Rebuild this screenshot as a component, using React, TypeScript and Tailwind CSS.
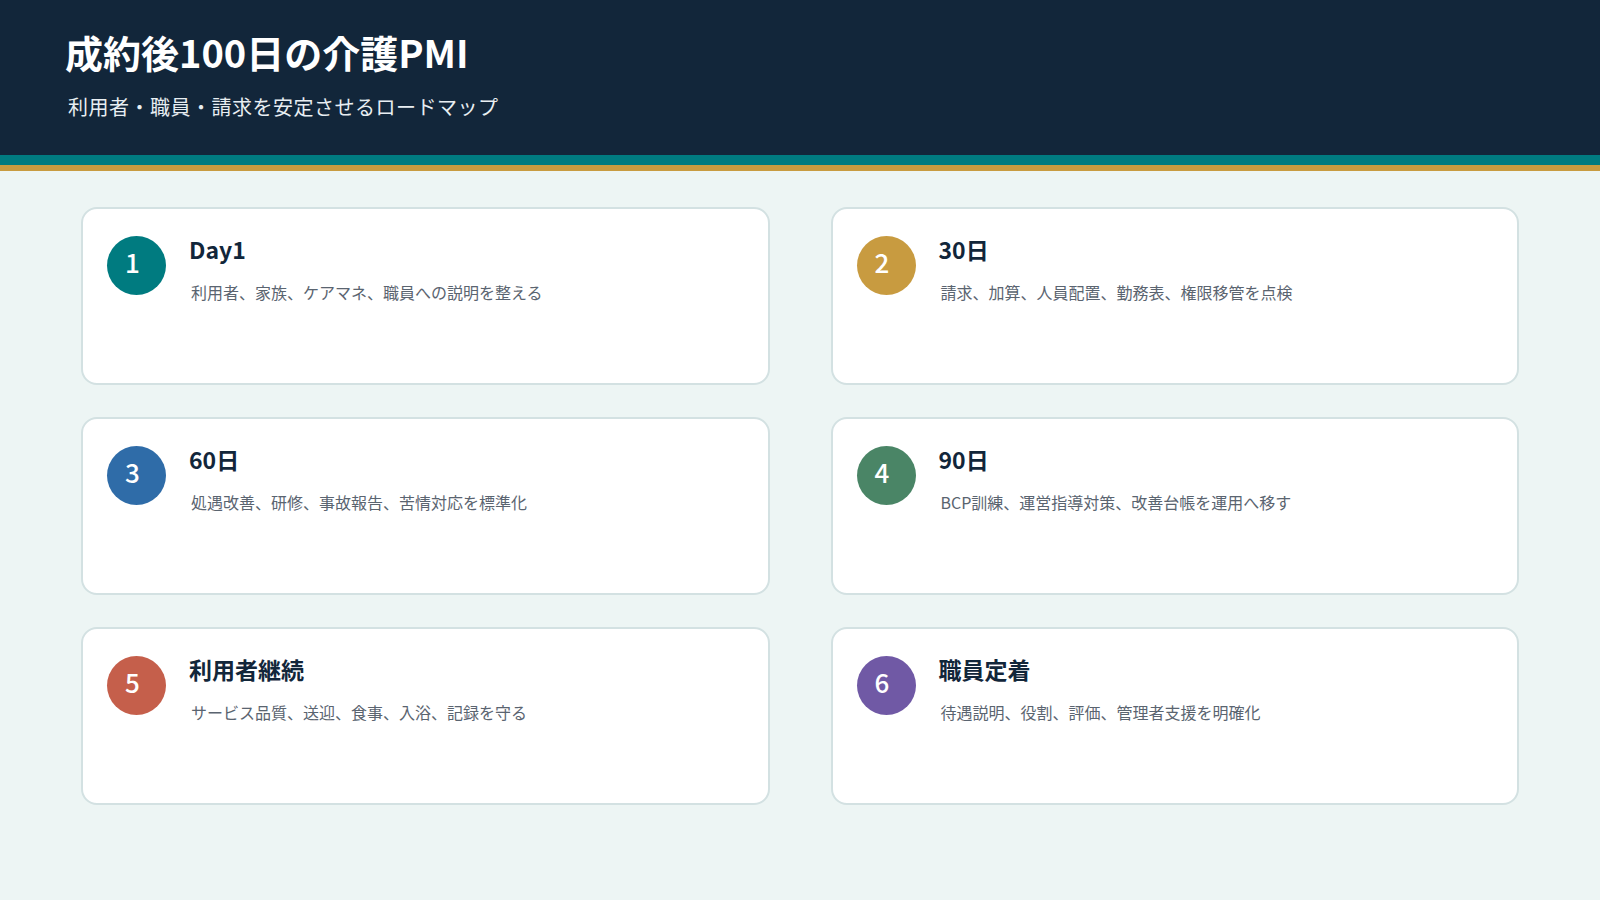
const items = [
  { n: "1", t: "Day1", d: "利用者、家族、ケアマネ、職員への説明を整える", c: "bg-[#007b80]" },
  { n: "2", t: "30日", d: "請求、加算、人員配置、勤務表、権限移管を点検", c: "bg-[#c89b40]" },
  { n: "3", t: "60日", d: "処遇改善、研修、事故報告、苦情対応を標準化", c: "bg-[#2f6ca8]" },
  { n: "4", t: "90日", d: "BCP訓練、運営指導対策、改善台帳を運用へ移す", c: "bg-[#4a8566]" },
  { n: "5", t: "利用者継続", d: "サービス品質、送迎、食事、入浴、記録を守る", c: "bg-[#c55f4b]" },
  { n: "6", t: "職員定着", d: "待遇説明、役割、評価、管理者支援を明確化", c: "bg-[#7059a5]" },
];

export default function App() {
  return (
    <div className="w-[1600px] h-[900px] bg-[#edf5f4] overflow-hidden" style={{ fontFamily: '"Noto Sans CJK JP", "Noto Sans", sans-serif' }}>
      <div className="h-[155px] bg-[#12263a] pl-[65px] pt-[24px]">
        <h1 className="text-[38px] font-bold text-white leading-[56px]">成約後100日の介護PMI</h1>
        <p className="text-[20px] text-[#e8eef2] mt-[12px] ml-[3px] leading-[30px] tracking-[0.5px]">利用者・職員・請求を安定させるロードマップ</p>
      </div>
      <div className="h-[10px] bg-[#007b80]" />
      <div className="h-[6px] bg-[#c89b40]" />
      <div className="grid grid-cols-2 gap-x-[61px] gap-y-[32px] px-[81px] pt-[36px]">
        {items.map((it) => (
          <div key={it.n} className="h-[178px] bg-white border-2 border-[#d3e1e2] rounded-[16px] flex pl-[24px] pt-[27px]">
            <div className={`w-[59px] h-[59px] rounded-full ${it.c} text-white text-[26px] font-medium flex items-center justify-center shrink-0 pr-[8px] pb-[8px]`}>{it.n}</div>
            <div className="ml-[23px] -mt-[4px]">
              <div className="text-[23px] font-bold text-[#12263a] leading-[34px]">{it.t}</div>
              <div className="text-[16px] text-[#5a6470] mt-[14px] ml-[2px] leading-[24px]">{it.d}</div>
            </div>
          </div>
        ))}
      </div>
    </div>
  );
}
